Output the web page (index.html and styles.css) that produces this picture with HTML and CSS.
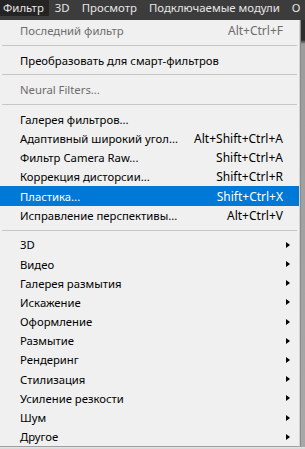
FILE: index.html
```html
<!DOCTYPE html>
<html lang="ru">
<head>
    <meta charset="UTF-8">
    <meta name="viewport" content="width=device-width, initial-scale=1.0">
    <title>Фильтр</title>
    <link rel="stylesheet" href="styles.css">
</head>
<body>
    <div class="menubar">
        <span class="menubar-item active">Фильтр</span>
        <span class="menubar-item">3D</span>
        <span class="menubar-item">Просмотр</span>
        <span class="menubar-item">Подключаемые модули</span>
        <span class="menubar-item">О</span>
    </div>

    <div class="screen">
        <div class="menu">
            <div class="item disabled"><span>Последний фильтр</span><span class="key">Alt+Ctrl+F</span></div>
            <div class="sep"></div>
            <div class="item"><span>Преобразовать для смарт-фильтров</span></div>
            <div class="sep"></div>
            <div class="item disabled"><span>Neural Filters...</span></div>
            <div class="sep"></div>
            <div class="item"><span>Галерея фильтров...</span></div>
            <div class="item"><span>Адаптивный широкий угол...</span><span class="key">Alt+Shift+Ctrl+A</span></div>
            <div class="item"><span>Фильтр Camera Raw...</span><span class="key">Shift+Ctrl+A</span></div>
            <div class="item"><span>Коррекция дисторсии...</span><span class="key">Shift+Ctrl+R</span></div>
            <div class="item selected"><span>Пластика...</span><span class="key">Shift+Ctrl+X</span></div>
            <div class="item"><span>Исправление перспективы...</span><span class="key">Alt+Ctrl+V</span></div>
            <div class="sep"></div>
            <div class="item sub"><span>3D</span><span class="arrow"></span></div>
            <div class="item sub"><span>Видео</span><span class="arrow"></span></div>
            <div class="item sub"><span>Галерея размытия</span><span class="arrow"></span></div>
            <div class="item sub"><span>Искажение</span><span class="arrow"></span></div>
            <div class="item sub"><span>Оформление</span><span class="arrow"></span></div>
            <div class="item sub"><span>Размытие</span><span class="arrow"></span></div>
            <div class="item sub"><span>Рендеринг</span><span class="arrow"></span></div>
            <div class="item sub"><span>Стилизация</span><span class="arrow"></span></div>
            <div class="item sub"><span>Усиление резкости</span><span class="arrow"></span></div>
            <div class="item sub"><span>Шум</span><span class="arrow"></span></div>
            <div class="item sub"><span>Другое</span><span class="arrow"></span></div>
        </div>
        <div class="shadow-right"></div>
    </div>
    <div class="shadow-bottom"></div>
</body>
</html>
```

FILE: styles.css
```css
body {
    margin: 0;
    width: 305px;
    height: 449px;
    overflow: hidden;
    background: #b4b4b4;
    font-family: "Noto Sans", "Open Sans", sans-serif;
}

.menubar {
    display: flex;
    height: 20px;
    background: #3c3c3c;
    color: #e6e6e6;
    font-size: 11.4px;
    white-space: nowrap;
    overflow: hidden;
}

.menubar-item {
    height: 16px;
    line-height: 16px;
    padding: 0 6px;
}

.menubar-item.active {
    background: #242424;
    padding: 0 5px 0 3px;
}

.screen {
    display: flex;
}

.menu {
    width: 299px;
    background: #f0f0f0;
    border-right: 1px solid #d4d4d4;
    border-bottom: 1px solid #a0a0a0;
    padding: 1px 0 0;
    font-size: 11.3px;
    color: #000;
}

.item {
    display: flex;
    justify-content: space-between;
    align-items: center;
    height: 19.2px;
    padding: 0 16px 0 20px;
    white-space: nowrap;
}

.item.disabled {
    color: #6d6d6d;
}

.item.selected {
    background: #0078d7;
    color: #fff;
}

.item.sub {
    padding-right: 9px;
}

.key {
    font-size: 12px;
}

.arrow {
    width: 0;
    height: 0;
    border-top: 3.5px solid transparent;
    border-bottom: 3.5px solid transparent;
    border-left: 4px solid #000;
}

.sep {
    height: 10.4px;
    display: flex;
    align-items: center;
    padding: 0 2px;
}

.sep::after {
    content: "";
    flex: 1;
    height: 1px;
    background: #c6c6c6;
}

.shadow-right {
    flex: 1;
    background: linear-gradient(to bottom, #2e2e2e 0, #2e2e2e 20px, #9c9c9c 24px, #a8a8a8);
    border-left: 1px solid #8a8a8a;
}

.shadow-bottom {
    height: 10px;
    background: linear-gradient(to bottom, #e4e4e4, #a8a8a8);
}
```
